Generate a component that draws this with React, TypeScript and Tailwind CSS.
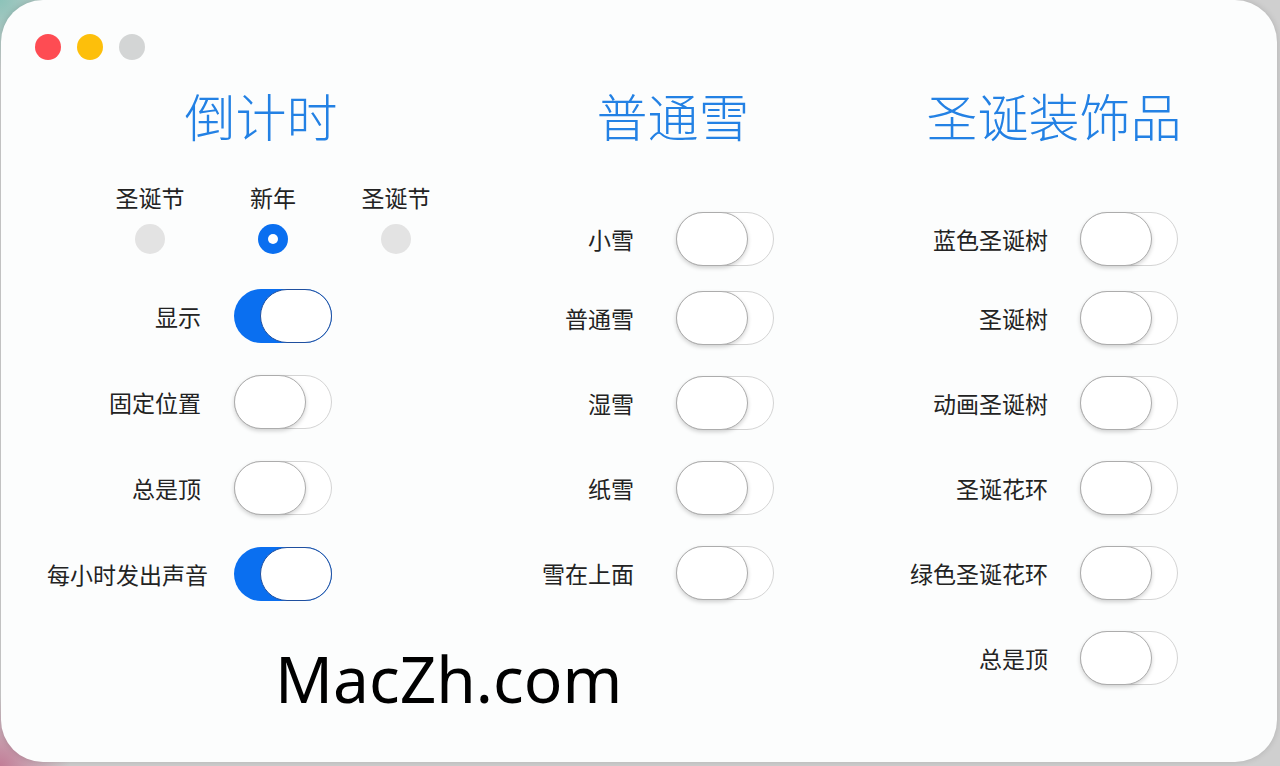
import React from "react";

const cjk = { fontFamily: '"Noto Sans CJK SC", "Noto Sans", sans-serif' };

const Toggle = ({ on = false }: { on?: boolean }) => (
  <div
    className={`flex h-[54px] w-[98px] shrink-0 items-center rounded-full ${
      on ? "justify-end bg-[#0a6ff0]" : "justify-start border border-[#d4d4d4] bg-white"
    }`}
  >
    <div
      className={`h-[54px] w-[72px] rounded-full bg-white ${
        on
          ? "border-[1.5px] border-[#1f4f9e]"
          : "-ml-px border border-[#acacac] shadow-[0_2px_4px_rgba(0,0,0,0.18)]"
      }`}
    />
  </div>
);

const Row = ({ label, labelWidth, gap, on }: { label: string; labelWidth: string; gap: string; on?: boolean }) => (
  <div className={`flex h-[54px] items-center ${gap}`}>
    <div className={`${labelWidth} text-right text-[23px] leading-none text-[#232323]`}>{label}</div>
    <Toggle on={on} />
  </div>
);

const Radio = ({ label, on = false }: { label: string; on?: boolean }) => (
  <div className="flex w-[100px] flex-col items-center">
    <div className="h-[30px] text-[23px] leading-[30px] text-[#232323]">{label}</div>
    <div
      className={`mt-[12px] flex h-[30px] w-[30px] items-center justify-center rounded-full ${
        on ? "bg-[#0a6ff0]" : "bg-[#e3e3e3]"
      }`}
    >
      {on && <div className="h-[10px] w-[10px] rounded-full bg-white" />}
    </div>
  </div>
);

const Title = ({ text, extra = "" }: { text: string; extra?: string }) => (
  <h1 className={`h-[50px] text-center text-[51px] font-light leading-[50px] text-[#2381e4] ${extra}`}>{text}</h1>
);

export default function App() {
  const snow = ["小雪", "普通雪", "湿雪", "纸雪", "雪在上面"];
  const deco = ["蓝色圣诞树", "圣诞树", "动画圣诞树", "圣诞花环", "绿色圣诞花环", "总是顶"];

  return (
    <div className="h-[766px] w-[1280px] overflow-hidden bg-[#cfcfcf] bg-[radial-gradient(circle_at_0_0,#8cc3b9_0,transparent_70px),radial-gradient(circle_at_0_100%,#c27d97_0,transparent_70px)]" style={cjk}>
      <div className="relative ml-px mr-[3px] h-[762px] rounded-[42px] bg-[#fcfdfd] shadow-[0_0_6px_rgba(0,0,0,0.15)]">
        {/* traffic lights */}
        <div className="flex gap-[16px] pl-[34px] pt-[34px]">
          <div className="h-[26px] w-[26px] rounded-full bg-[#fe4c53]" />
          <div className="h-[26px] w-[26px] rounded-full bg-[#fdbf0b]" />
          <div className="h-[26px] w-[26px] rounded-full bg-[#d3d5d5]" />
        </div>

        <div className="mt-[30px] flex">
          {/* countdown */}
          <div className="flex w-[520px] flex-col">
            <Title text="倒计时" />
            <div className="ml-[99px] mt-[42px] flex gap-[23px]">
              <Radio label="圣诞节" />
              <Radio label="新年" on />
              <Radio label="圣诞节" />
            </div>
            <div className="mt-[35px] flex flex-col gap-[32px]">
              <Row label="显示" labelWidth="w-[200px]" gap="gap-[33px]" on />
              <Row label="固定位置" labelWidth="w-[200px]" gap="gap-[33px]" />
              <Row label="总是顶" labelWidth="w-[200px]" gap="gap-[33px]" />
              <Row label="每小时发出声音" labelWidth="w-[207px]" gap="gap-[26px]" on />
            </div>
          </div>

          {/* snow */}
          <div className="flex w-[304px] flex-col">
            <Title text="普通雪" />
            <div className="mt-[72px] flex flex-col gap-[31px]">
              {snow.map((s, i) => (
                <div key={s} className={i === 0 ? "-mb-[6px]" : ""}>
                  <Row label={s} labelWidth="w-[113px]" gap="gap-[42px]" />
                </div>
              ))}
            </div>
          </div>

          {/* decorations */}
          <div className="flex flex-1 flex-col">
            <Title text="圣诞装饰品" extra="pl-[6px]" />
            <div className="mt-[72px] flex flex-col gap-[31px]">
              {deco.map((s, i) => (
                <div key={s} className={i === 0 ? "-mb-[6px]" : ""}>
                  <Row label={s} labelWidth="w-[223px]" gap="gap-[32px]" />
                </div>
              ))}
            </div>
          </div>
        </div>

        {/* watermark */}
        <div
          className="absolute left-[274px] top-[635px] text-[64px] leading-[88px] text-black"
          style={{ fontFamily: '"Noto Sans", sans-serif' }}
        >
          MacZh.com
        </div>
      </div>
    </div>
  );
}
